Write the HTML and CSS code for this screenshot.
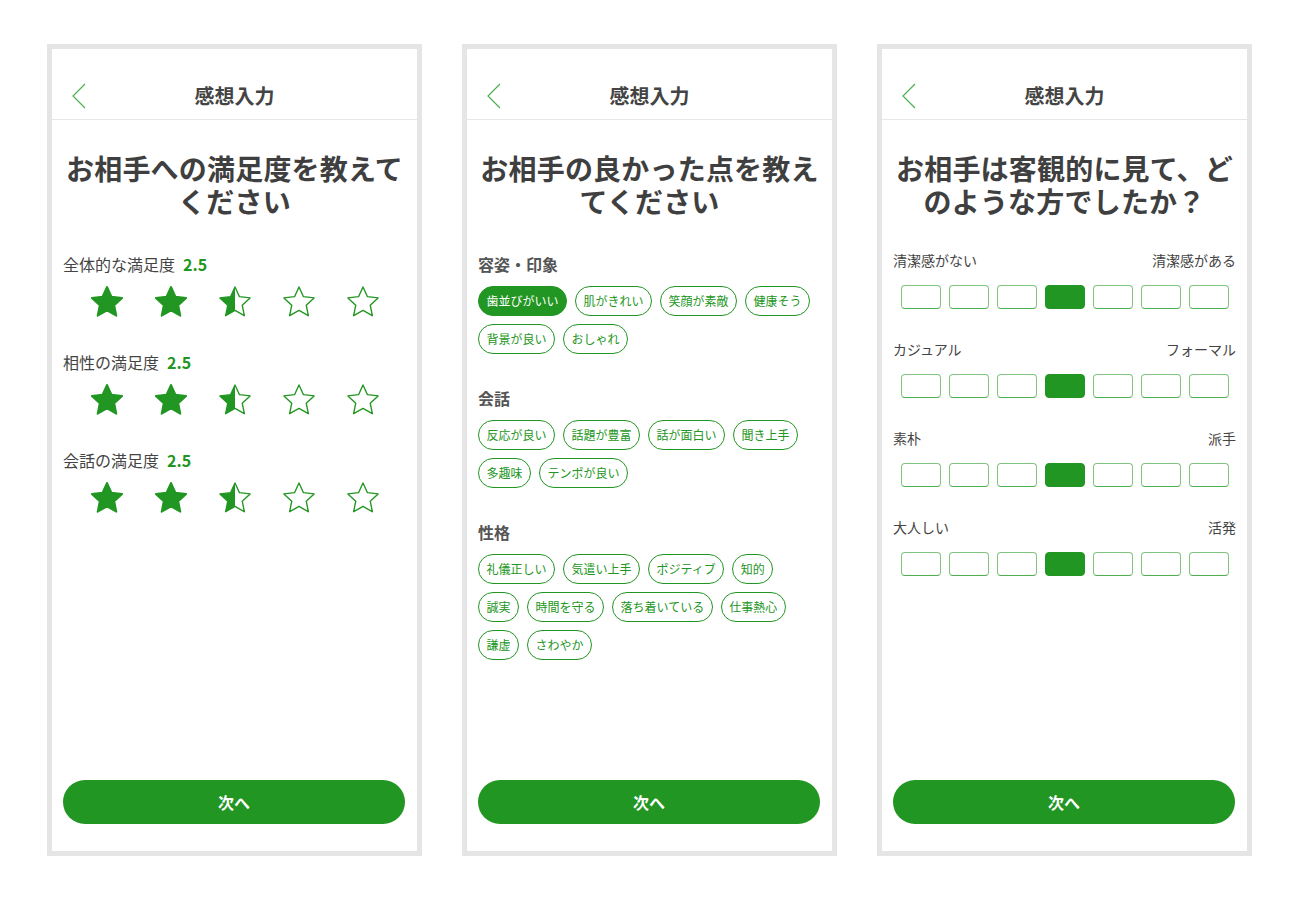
FILE: index.html
```html
<!DOCTYPE html>
<html lang="ja">
<head>
<meta charset="utf-8">
<title>感想入力</title>
<link rel="stylesheet" href="styles.css">
</head>
<body>
<svg class="defs" width="0" height="0" aria-hidden="true">
  <defs>
    <linearGradient id="half" x1="0" y1="0" x2="1" y2="0">
      <stop offset="50%" stop-color="#229622"/>
      <stop offset="50%" stop-color="#ffffff"/>
    </linearGradient>
    <polygon id="starshape" points="17,2.8 21.23,11.98 31.27,13.16 23.85,20.02 25.82,29.94 17,25 8.18,29.94 10.15,20.02 2.73,13.16 12.77,11.98"/>
  </defs>
</svg>
<div class="wrap">

  <section class="phone">
    <header class="header">
      <div class="bar">
        <svg class="back" width="16" height="26" viewBox="0 0 16 26"><polyline points="13,1 1,13 13,25" fill="none" stroke="#4caf50" stroke-width="1.2"/></svg>
        <h1 class="title">感想入力</h1>
        <span></span>
      </div>
    </header>
    <div class="content">
      <h2 class="question">お相手への満足度を教えて<br>ください</h2>
      <div class="rating">
        <div class="rating-label">全体的な満足度<span class="score">2.5</span></div>
        <div class="stars">
          <svg class="star full" viewBox="0 0 34 34"><use href="#starshape"/></svg>
          <svg class="star full" viewBox="0 0 34 34"><use href="#starshape"/></svg>
          <svg class="star halfstar" viewBox="0 0 34 34"><use href="#starshape"/></svg>
          <svg class="star empty" viewBox="0 0 34 34"><use href="#starshape"/></svg>
          <svg class="star empty" viewBox="0 0 34 34"><use href="#starshape"/></svg>
        </div>
      </div>
      <div class="rating">
        <div class="rating-label">相性の満足度<span class="score">2.5</span></div>
        <div class="stars">
          <svg class="star full" viewBox="0 0 34 34"><use href="#starshape"/></svg>
          <svg class="star full" viewBox="0 0 34 34"><use href="#starshape"/></svg>
          <svg class="star halfstar" viewBox="0 0 34 34"><use href="#starshape"/></svg>
          <svg class="star empty" viewBox="0 0 34 34"><use href="#starshape"/></svg>
          <svg class="star empty" viewBox="0 0 34 34"><use href="#starshape"/></svg>
        </div>
      </div>
      <div class="rating">
        <div class="rating-label">会話の満足度<span class="score">2.5</span></div>
        <div class="stars">
          <svg class="star full" viewBox="0 0 34 34"><use href="#starshape"/></svg>
          <svg class="star full" viewBox="0 0 34 34"><use href="#starshape"/></svg>
          <svg class="star halfstar" viewBox="0 0 34 34"><use href="#starshape"/></svg>
          <svg class="star empty" viewBox="0 0 34 34"><use href="#starshape"/></svg>
          <svg class="star empty" viewBox="0 0 34 34"><use href="#starshape"/></svg>
        </div>
      </div>
    </div>
    <button class="next">次へ</button>
  </section>

  <section class="phone">
    <header class="header">
      <div class="bar">
        <svg class="back" width="16" height="26" viewBox="0 0 16 26"><polyline points="13,1 1,13 13,25" fill="none" stroke="#4caf50" stroke-width="1.2"/></svg>
        <h1 class="title">感想入力</h1>
        <span></span>
      </div>
    </header>
    <div class="content">
      <h2 class="question">お相手の良かった点を教え<br>てください</h2>
      <div class="group">
        <h3 class="group-title">容姿・印象</h3>
        <div class="chips">
          <span class="chip selected">歯並びがいい</span>
          <span class="chip">肌がきれい</span>
          <span class="chip">笑顔が素敵</span>
          <span class="chip">健康そう</span>
          <span class="chip">背景が良い</span>
          <span class="chip">おしゃれ</span>
        </div>
      </div>
      <div class="group">
        <h3 class="group-title">会話</h3>
        <div class="chips">
          <span class="chip">反応が良い</span>
          <span class="chip">話題が豊富</span>
          <span class="chip">話が面白い</span>
          <span class="chip">聞き上手</span>
          <span class="chip">多趣味</span>
          <span class="chip">テンポが良い</span>
        </div>
      </div>
      <div class="group">
        <h3 class="group-title">性格</h3>
        <div class="chips">
          <span class="chip">礼儀正しい</span>
          <span class="chip">気遣い上手</span>
          <span class="chip">ポジティブ</span>
          <span class="chip">知的</span>
          <span class="chip">誠実</span>
          <span class="chip">時間を守る</span>
          <span class="chip">落ち着いている</span>
          <span class="chip">仕事熱心</span>
          <span class="chip">謙虚</span>
          <span class="chip">さわやか</span>
        </div>
      </div>
    </div>
    <button class="next">次へ</button>
  </section>

  <section class="phone">
    <header class="header">
      <div class="bar">
        <svg class="back" width="16" height="26" viewBox="0 0 16 26"><polyline points="13,1 1,13 13,25" fill="none" stroke="#4caf50" stroke-width="1.2"/></svg>
        <h1 class="title">感想入力</h1>
        <span></span>
      </div>
    </header>
    <div class="content">
      <h2 class="question">お相手は客観的に見て、ど<br>のような方でしたか？</h2>
      <div class="scales">
        <div class="scale">
          <div class="scale-labels"><span>清潔感がない</span><span>清潔感がある</span></div>
          <div class="boxes"><span class="box"></span><span class="box"></span><span class="box"></span><span class="box on"></span><span class="box"></span><span class="box"></span><span class="box"></span></div>
        </div>
        <div class="scale">
          <div class="scale-labels"><span>カジュアル</span><span>フォーマル</span></div>
          <div class="boxes"><span class="box"></span><span class="box"></span><span class="box"></span><span class="box on"></span><span class="box"></span><span class="box"></span><span class="box"></span></div>
        </div>
        <div class="scale">
          <div class="scale-labels"><span>素朴</span><span>派手</span></div>
          <div class="boxes"><span class="box"></span><span class="box"></span><span class="box"></span><span class="box on"></span><span class="box"></span><span class="box"></span><span class="box"></span></div>
        </div>
        <div class="scale">
          <div class="scale-labels"><span>大人しい</span><span>活発</span></div>
          <div class="boxes"><span class="box"></span><span class="box"></span><span class="box"></span><span class="box on"></span><span class="box"></span><span class="box"></span><span class="box"></span></div>
        </div>
      </div>
    </div>
    <button class="next">次へ</button>
  </section>

</div>
</body>
</html>
```
FILE: styles.css
```css
* { box-sizing: border-box; }

html, body {
  margin: 0;
  padding: 0;
  background: #ffffff;
}

body {
  font-family: "Noto Sans CJK JP", "Noto Sans", sans-serif;
  color: #444444;
}

.defs {
  position: absolute;
  width: 0;
  height: 0;
  overflow: hidden;
}

.wrap {
  display: flex;
  gap: 40px;
  padding: 44px 0 0 47px;
}

.phone {
  width: 375px;
  height: 812px;
  border: 5px solid #e5e5e5;
  background: #fff;
  display: flex;
  flex-direction: column;
}

.header {
  height: 71px;
  padding-top: 24px;
  border-bottom: 1px solid #e6e6e6;
}

.bar {
  height: 46px;
  display: grid;
  grid-template-columns: 60px 1fr 60px;
  align-items: center;
}

.back {
  display: block;
  margin-left: 20px;
}

.title {
  margin: 0;
  text-align: center;
  font-size: 20px;
  font-weight: 700;
  color: #444;
  line-height: 1;
}

.content {
  padding: 0 11px;
  flex: 1;
}

.question {
  margin: 32px 0 34px;
  font-size: 28px;
  line-height: 33px;
  font-weight: 700;
  text-align: center;
  color: #3f3f3f;
  letter-spacing: 0.2px;
}

/* ratings */
.rating {
  margin-bottom: 30px;
}

.rating-label {
  font-size: 16px;
  line-height: 24px;
  color: #444;
}

.score {
  margin-left: 8px;
  font-weight: 700;
  color: #229622;
}

.stars {
  margin-top: 8px;
  display: flex;
  justify-content: center;
  gap: 28px;
}

.star {
  width: 36px;
  height: 36px;
  display: block;
  stroke: #229622;
  stroke-linejoin: round;
}

.star.full {
  fill: #229622;
  stroke-width: 1.8;
}

.star.halfstar {
  fill: url(#half);
  stroke-width: 1.3;
}

.star.empty {
  fill: #fff;
  stroke-width: 1.3;
}

/* chips */
.group {
  margin-bottom: 32px;
}

.group-title {
  margin: 0;
  font-size: 16px;
  line-height: 24px;
  font-weight: 700;
  color: #555;
}

.chips {
  margin-top: 10px;
  display: flex;
  flex-wrap: wrap;
  gap: 8px;
}

.chip {
  height: 30px;
  padding: 0 7.5px;
  border: 1px solid #229622;
  border-radius: 15px;
  font-size: 12px;
  line-height: 28px;
  color: #229622;
  background: #fff;
  white-space: nowrap;
}

.chip.selected {
  background: #229622;
  color: #fff;
}

/* scales */
.scales {
  margin-top: -2px;
}

.scale {
  margin-bottom: 30px;
}

.scale-labels {
  display: flex;
  justify-content: space-between;
  font-size: 14px;
  line-height: 20px;
  color: #444;
}

.boxes {
  margin-top: 15px;
  display: flex;
  justify-content: center;
  gap: 8px;
}

.box {
  width: 40px;
  height: 24px;
  border: 1.5px solid #80c680;
  border-bottom-color: #4fae4f;
  border-radius: 4px;
  background: #fff;
}

.box.on {
  background: #229622;
  border-color: #229622;
}

/* button */
.next {
  margin: 0 12px 27px 11px;
  height: 44px;
  border: none;
  border-radius: 22px;
  background: #229622;
  color: #fff;
  font-family: "Noto Sans CJK JP", "Noto Sans", sans-serif;
  font-size: 16px;
  font-weight: 700;
  cursor: pointer;
}
```
